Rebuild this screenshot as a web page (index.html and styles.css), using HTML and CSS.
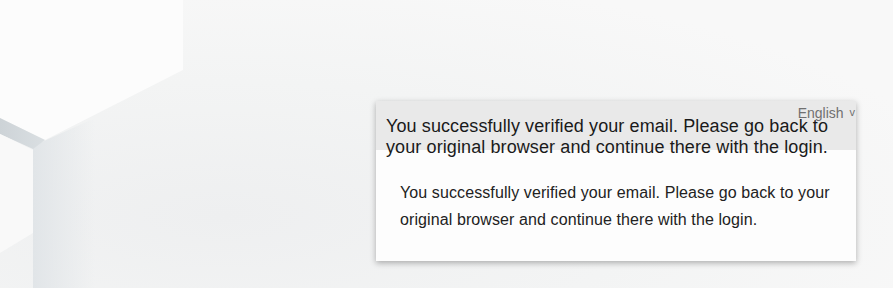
FILE: index.html
```html
<!DOCTYPE html>
<html lang="en">
<head>
<meta charset="utf-8">
<title>Email verified</title>
<link rel="stylesheet" href="styles.css">
</head>
<body>
<svg class="backdrop" width="893" height="288" viewBox="0 0 893 288" aria-hidden="true">
  <defs>
    <radialGradient id="bg" cx="0.25" cy="0.75" r="0.85">
      <stop offset="0" stop-color="#eeeff0"/>
      <stop offset="0.55" stop-color="#f3f4f4"/>
      <stop offset="1" stop-color="#f8f8f8"/>
    </radialGradient>
    <linearGradient id="band" x1="0" y1="0" x2="1" y2="0">
      <stop offset="0" stop-color="#cdd3d7"/>
      <stop offset="1" stop-color="#dadfe2"/>
    </linearGradient>
    <linearGradient id="shade" x1="0" y1="0" x2="1" y2="0">
      <stop offset="0" stop-color="#e1e5e8"/>
      <stop offset="1" stop-color="#e1e5e8" stop-opacity="0"/>
    </linearGradient>
  </defs>
  <rect width="893" height="288" fill="url(#bg)"/>
  <polygon points="33,146 95,118 95,288 33,288" fill="url(#shade)"/>
  <polygon points="0,0 183,0 183,70 45,140 0,118" fill="#fcfcfc"/>
  <polygon points="0,118 45,140 33,149 0,134" fill="url(#band)"/>
  <polygon points="0,134 33,150 33,233 0,253" fill="#f9f9f9"/>
</svg>
<main class="page">
  <section class="card">
    <div class="lang">English <span class="caret">v</span></div>
    <header class="card-head">
      <h1 class="title">You successfully verified your email. Please go back to your original browser and continue there with the login.</h1>
    </header>
    <div class="card-body">
      <p class="message">You successfully verified your email. Please go back to your original browser and continue there with the login.</p>
    </div>
  </section>
</main>
</body>
</html>
```
FILE: styles.css
```css
html, body {
  margin: 0;
  padding: 0;
  width: 893px;
  height: 288px;
  overflow: hidden;
  background: #f5f6f7;
  font-family: "Liberation Sans", Arial, sans-serif;
}

.backdrop {
  position: absolute;
  left: 0;
  top: 0;
}

.page {
  position: relative;
  display: flex;
  padding: 101px 0 0 376px;
}

.card {
  position: relative;
  width: 480px;
  height: 160px;
  background: #fdfdfd;
  box-shadow: 0 2px 6px rgba(0, 0, 0, 0.3);
}

.card-head {
  height: 49px;
  background: #e9e9e9;
  padding: 15px 10px 0 10px;
  box-sizing: border-box;
}

.title {
  margin: 0;
  font-size: 18px;
  font-weight: normal;
  line-height: 21px;
  letter-spacing: 0.1px;
  color: #1a1a1a;
  width: 450px;
}

.card-body {
  padding: 29px 24px 0 24px;
}

.message {
  margin: 0;
  font-size: 16px;
  line-height: 27px;
  letter-spacing: 0.1px;
  color: #222;
}

.lang {
  position: absolute;
  top: 4px;
  right: 1px;
  font-size: 14px;
  color: #707070;
}

.caret {
  font-size: 11px;
  vertical-align: 2px;
  margin-left: 2px;
}
```
